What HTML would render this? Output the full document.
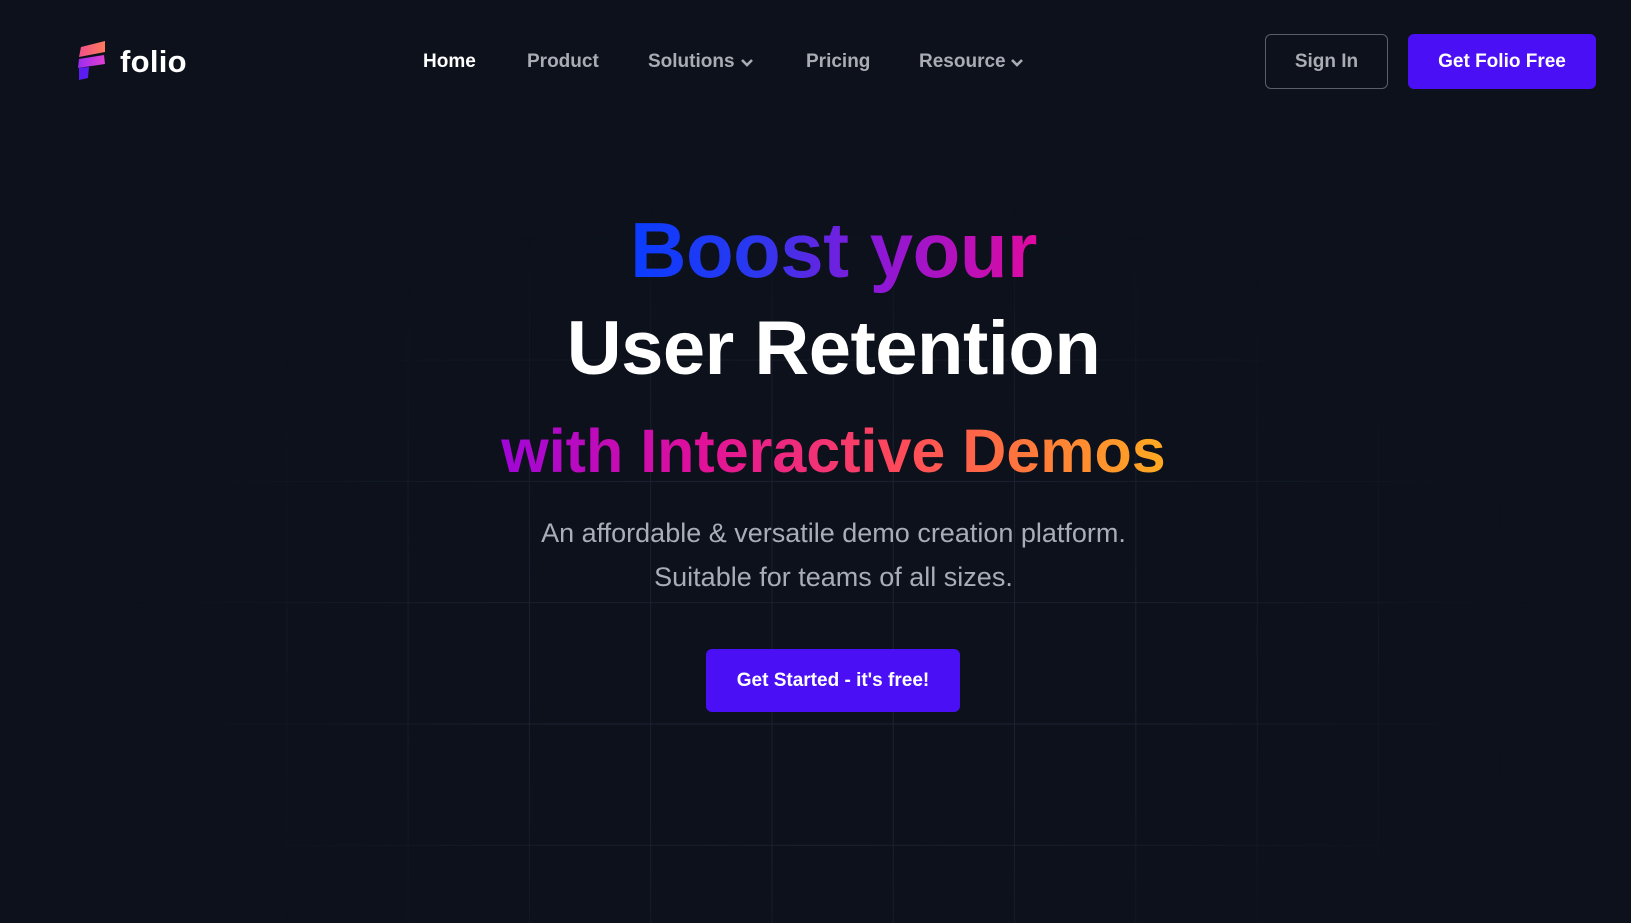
<!DOCTYPE html>
<html><head><meta charset="utf-8"><style>
*{margin:0;padding:0;box-sizing:border-box}
html,body{width:1631px;height:923px;overflow:hidden;background:#0c111b;font-family:"Liberation Sans",sans-serif}
.grid{position:absolute;left:0;top:0;width:1631px;height:923px;
background-image:linear-gradient(to right,#1b2231 1px,transparent 1px),linear-gradient(to bottom,#1b2231 1px,transparent 1px);
background-size:121.3px 121.3px;background-position:43.7px 117px;
-webkit-mask-image:radial-gradient(ellipse 700px 450px at 833px 640px,#000 45%,transparent 100%);
mask-image:radial-gradient(ellipse 700px 450px at 833px 640px,#000 45%,transparent 100%)}
.abs{position:absolute}
.nav{position:absolute;top:51px;font-size:19px;font-weight:bold;color:#a9acb3;white-space:nowrap}
.chev{position:absolute;top:58px}
.h{position:absolute;left:18px;width:1631px;text-align:center;font-weight:bold;white-space:nowrap}
.grad{-webkit-background-clip:text;background-clip:text;color:transparent}
</style></head><body>
<div class="grid"></div>
<svg class="abs" style="left:75px;top:40px" width="34" height="42" viewBox="0 0 34 42">
<defs>
<linearGradient id="g1" x1="0" x2="1"><stop offset="0" stop-color="#f0508a"/><stop offset="1" stop-color="#ff7a5a"/></linearGradient>
<linearGradient id="g2" x1="0" x2="1"><stop offset="0" stop-color="#9b2cf0"/><stop offset="1" stop-color="#e040d0"/></linearGradient>
</defs>
<path d="M6 7 L30 1 L30 12 L4 17 Z" fill="url(#g1)"/>
<path d="M4 19 L29 15 L30 24 L3 28 Z" fill="url(#g2)"/>
<path d="M4 28 L14 27 L13 38 L4 40 Z" fill="#5a1cf0"/>
</svg>
<div class="abs" style="left:120px;top:44px;font-size:31px;font-weight:bold;color:#fff;letter-spacing:0.3px">folio</div>
<div class="nav" style="left:423px;color:#fff">Home</div>
<div class="nav" style="left:527px">Product</div>
<div class="nav" style="left:648px">Solutions</div>
<svg class="chev" style="left:740px" width="14" height="10" viewBox="0 0 14 10"><path d="M2 2 L7 7 L12 2" stroke="#a9acb3" stroke-width="2.6" fill="none"/></svg>
<div class="nav" style="left:806px">Pricing</div>
<div class="nav" style="left:919px">Resource</div>
<svg class="chev" style="left:1010px" width="14" height="10" viewBox="0 0 14 10"><path d="M2 2 L7 7 L12 2" stroke="#a9acb3" stroke-width="2.6" fill="none"/></svg>
<div class="abs" style="left:1265px;top:34px;width:123px;height:55px;border:1px solid #5a5e66;border-radius:6px;color:#a9acb3;font-size:19px;font-weight:bold;text-align:center;line-height:53px">Sign In</div>
<div class="abs" style="left:1408px;top:34px;width:188px;height:55px;background:#4a0ff5;border-radius:6px;color:#fff;font-size:19px;font-weight:bold;text-align:center;line-height:55px">Get Folio Free</div>
<div class="h" style="top:205px;font-size:78px;line-height:90px;letter-spacing:-0.5px"><span class="grad" style="background-image:linear-gradient(90deg,#0a3cff 0%,#2a38f0 30%,#8a18d8 60%,#e00aa0 100%)">Boost your</span></div>
<div class="h" style="top:304px;font-size:76px;line-height:90px;letter-spacing:-0.5px;color:#fff">User Retention</div>
<div class="h" style="top:413px;font-size:61px;line-height:76px"><span class="grad" style="background-image:linear-gradient(90deg,#a006d8 0%,#e0109a 30%,#ff4a5a 60%,#ff7a3a 80%,#ffaa20 100%)">with Interactive Demos</span></div>
<div class="h" style="top:511px;font-size:27px;line-height:44px;font-weight:normal;color:#a8adb8">An affordable &amp; versatile demo creation platform.<br>Suitable for teams of all sizes.</div>
<div class="abs" style="left:706px;top:649px;width:254px;height:63px;background:#4a0ff5;border-radius:6px;color:#fff;font-size:19px;font-weight:bold;text-align:center;line-height:63px">Get Started - it's free!</div>
</body></html>
